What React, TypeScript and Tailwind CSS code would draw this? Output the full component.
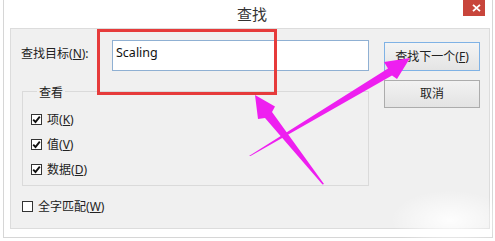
import React from 'react';

// ── Small pieces ──────────────────────────────────────────────────────────────

const Key: React.FC<{ k: string }> = ({ k }) => (
  <>
    (<span className="underline underline-offset-[1px]">{k}</span>)
  </>
);

const CheckBox: React.FC<{ checked?: boolean; label: string; k: string }> = ({
  checked = false,
  label,
  k,
}) => (
  <div className="flex items-center h-[25px]">
    <span className="w-[11px] h-[11px] border border-[#333] bg-white flex items-center justify-center shrink-0">
      {checked && (
        <svg width="9" height="9" viewBox="0 0 9 9">
          <path d="M1.2 4.6 L3.5 7 L7.8 1.6" fill="none" stroke="#111" strokeWidth="1.9" />
        </svg>
      )}
    </span>
    <span className="ml-[5px] text-[12px] leading-[14px] text-[#222]">
      {label}
      <Key k={k} />
    </span>
  </div>
);

// ── Main ─────────────────────────────────────────────────────────────────────

export default function App() {
  return (
    <div className="relative w-[495px] h-[241px] bg-white overflow-hidden font-['Noto_Sans','Noto_Sans_CJK_SC',sans-serif]">
      {/* window frame */}
      <div className="ml-[3px] w-[490px] h-[238px] border-x border-b border-[#d6d6d6] bg-white flex flex-col">
        {/* title bar */}
        <div className="relative h-[28px] flex items-center justify-center">
          <span className="text-[15px] leading-[18px] text-[#333] ml-[8px] -mt-[1px]">查找</span>
          <div className="absolute right-[7px] top-0 w-[22px] h-[16px] bg-[#c8453b] flex items-center justify-center pl-[4px]">
            <svg width="9" height="8" viewBox="0 0 9 8">
              <path d="M1 0.8 L8 7.2 M8 0.8 L1 7.2" stroke="#fff" strokeWidth="1.8" />
            </svg>
          </div>
        </div>

        {/* client area */}
        <div className="ml-[6px] mr-[2px] h-[201px] border border-[#dcdcdc] bg-[#f0f0f0] flex pl-[10px] pt-[11px]">
          {/* left column */}
          <div className="w-[348px] flex flex-col">
            <div className="flex items-center h-[31px]">
              <span className="w-[91px] text-[12px] leading-[14px] text-[#222] -mt-[3px]">
                查找目标<Key k="N" />:
              </span>
              <div className="w-[257px] h-[31px] border border-[#8fb0d3] bg-white px-[3px] pt-[4px] text-[12.5px] leading-[16px] text-[#111]">
                Scaling
              </div>
            </div>

            <fieldset className="mt-[12px] ml-[1px] w-[347px] h-[103px] border border-[#dadada] pl-[8px] pt-[8px]">
              <legend className="ml-[6px] px-[2px] text-[12px] leading-[16px] text-[#222]">
                <span className="relative top-[2px]">查看</span>
              </legend>
              <CheckBox checked label="项" k="K" />
              <CheckBox checked label="值" k="V" />
              <CheckBox checked label="数据" k="D" />
            </fieldset>

            <div className="mt-[8px] ml-[1px]">
              <CheckBox label="全字匹配" k="W" />
            </div>
          </div>

          {/* right column */}
          <div className="ml-[15px] w-[96px] flex flex-col gap-[9px] pt-[2px]">
            <button className="h-[29px] border border-[#7fb2e5] bg-gradient-to-b from-[#f4f4f4] to-[#e4e4e4] text-[12px] leading-[14px] text-[#222]">
              查找下一个<Key k="F" />
            </button>
            <button className="h-[28px] border border-[#acacac] bg-gradient-to-b from-[#f2f2f2] to-[#e3e3e3] text-[12px] leading-[14px] text-[#222]">
              取消
            </button>
          </div>
        </div>
      </div>

      {/* red highlight rectangle */}
      <div className="absolute left-[97px] top-[29px] w-[180px] h-[66px] border-[3px] border-[#e63b3b]" />

      {/* faint watermark smudge */}
      <div className="absolute left-[390px] top-[190px] w-[120px] h-[60px] bg-[radial-gradient(ellipse_at_center,rgba(255,255,255,0.9),rgba(255,255,255,0)_70%)]" />

      {/* magenta arrows */}
      <svg className="absolute inset-0 pointer-events-none" width="495" height="241" viewBox="0 0 495 241">
        <polygon
          points="255,95 275,106.5 272,112 324,184 322.5,184.5 265,118 258,119"
          fill="#ee1ff0"
        />
        <polygon
          points="410,58 384,62 388,68.5 249,156 250.5,156 392,75.5 397,79"
          fill="#ee1ff0"
        />
      </svg>
    </div>
  );
}
